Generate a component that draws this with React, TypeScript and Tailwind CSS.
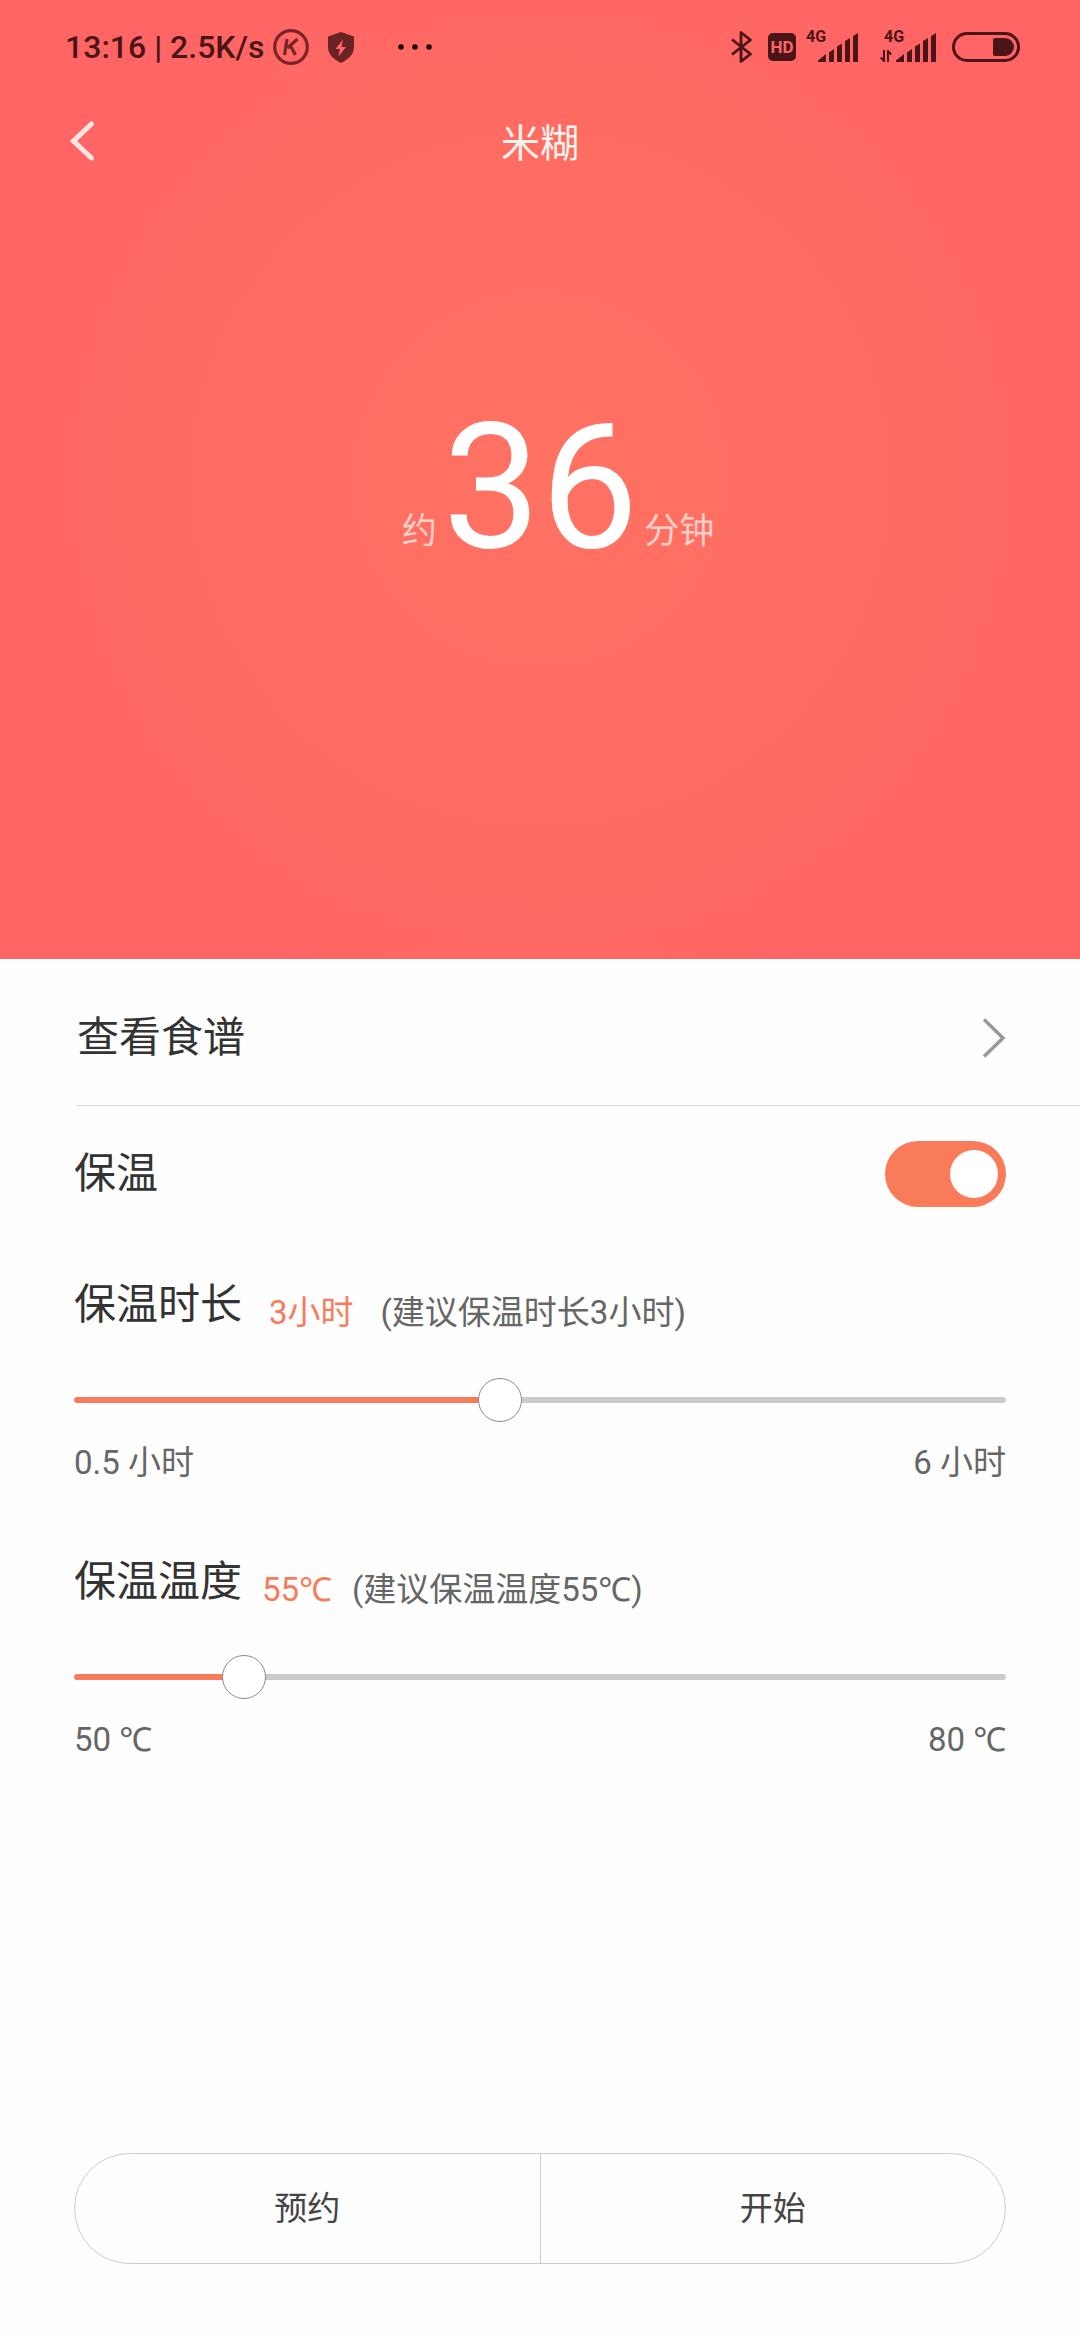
import { useState } from "react";

function SignalBars() {
  return (
    <svg width="40" height="29" viewBox="0 0 40 29" fill="currentColor">
      <path d="M0 27.5 8 21v8H0z" />
      <path d="M11 19.5 16 16v13h-5z" />
      <path d="M19 13.5 24 10.500v18.500h-5z" />
      <path d="M27 8 32 5v24h-5z" />
      <path d="M35 3 40 0v29h-5z" />
    </svg>
  );
}

function Signal({ transfer = false }: { transfer?: boolean }) {
  return (
    <div
      className={
        transfer
          ? "relative flex w-[56px] justify-end"
          : "relative flex w-[52px] justify-end"
      }
    >
      <span
        className={
          transfer
            ? "absolute -top-1 left-1 text-[16px] leading-4 font-bold"
            : "absolute -top-1 left-0 text-[16px] leading-4 font-bold"
        }
      >
        4G
      </span>
      {transfer && (
        <svg
          className="absolute bottom-0 left-0"
          width="12"
          height="12"
          viewBox="0 0 12 12"
          fill="none"
          stroke="currentColor"
          strokeWidth="2"
        >
          <path d="M4 0v11L.7 7.500M8 12V1l3.300 3.500" />
        </svg>
      )}
      <SignalBars />
    </div>
  );
}

function StatusBar() {
  return (
    <div className="flex h-[94px] items-center justify-between pr-[60px] pl-[65px] text-[#4b1417]">
      <div className="flex items-center">
        <span className="text-[32px] leading-10 font-medium whitespace-pre">
          13:16 | 2.5K/s
        </span>
        <svg
          className="ml-[9px] text-[#7a2427]"
          width="36"
          height="36"
          viewBox="0 0 36 36"
          fill="none"
          stroke="currentColor"
        >
          <circle cx="18" cy="18" r="16.300" strokeWidth="3.200" />
          <path
            d="M14 10 11.500 26M24.500 10 14.500 19M17.500 17 22.500 26"
            strokeWidth="3.200"
          />
        </svg>
        <svg
          className="ml-[18px] text-[#6b2225]"
          width="28"
          height="31"
          viewBox="0 0 28 31"
        >
          <path
            d="M14 0 27 4.500V15c0 7-5 12-13 16C6 27 1 22 1 15V4.500z"
            fill="currentColor"
          />
          <path d="M16 7.500 8.500 17h4.500l-1.500 7.500L19 15h-4.500z" fill="#ff6765" />
        </svg>
        <svg
          className="ml-[42px] text-[#1c0507]"
          width="36"
          height="6"
          viewBox="0 0 36 6"
          fill="currentColor"
        >
          <circle cx="4" cy="3" r="2.800" />
          <circle cx="18" cy="3" r="2.800" />
          <circle cx="32" cy="3" r="2.800" />
        </svg>
      </div>

      <div className="flex items-center">
        <svg
          width="22"
          height="34"
          viewBox="0 0 22 34"
          fill="none"
          stroke="currentColor"
          strokeWidth="2.800"
          strokeLinejoin="round"
        >
          <path d="M1 9.500 19.500 24 10 31.500v-29L19.500 10 1 24.500" />
        </svg>
        <span className="ml-[15px] flex h-7 w-7 items-center justify-center rounded-[5px] bg-current">
          <span className="text-[17px] leading-5 font-bold text-[#ff6765]">
            HD
          </span>
        </span>
        <div className="ml-[10px] flex gap-[22px]">
          <Signal />
          <Signal transfer />
        </div>
        <svg
          className="ml-4"
          width="68"
          height="30"
          viewBox="0 0 68 30"
          fill="none"
        >
          <rect
            x="1.500"
            y="1.500"
            width="65"
            height="27"
            rx="13.500"
            stroke="currentColor"
            strokeWidth="3"
          />
          <path
            d="M43 6h10a9 9 0 0 1 0 18H43a2 2 0 0 1-2-2V8a2 2 0 0 1 2-2z"
            fill="currentColor"
          />
        </svg>
      </div>
    </div>
  );
}

function Slider({
  id,
  title,
  unit,
  gap,
  hint,
  min,
  max,
  step,
  value,
  onChange,
}: {
  id: string;
  title: string;
  unit: string;
  gap: string;
  hint: string;
  min: number;
  max: number;
  step: number;
  value: number;
  onChange: (value: number) => void;
}) {
  const ratio = (value - min) / (max - min);
  const fill = `calc(22px + (100% - 44px) * ${ratio})`;

  return (
    <div className="flex h-[277px] flex-col">
      <div className={gap}>
        <label htmlFor={id} className="text-[42px] leading-[60px] text-[#333]">
          {title}
        </label>
        <span className="mt-2 text-[33px] leading-[60px] text-[#fa7b5c]">
          {value}
          {unit}
        </span>
        <span className="mt-2 text-[33px] leading-[60px] text-[#666]">
          {hint}
        </span>
      </div>
      <input
        id={id}
        type="range"
        min={min}
        max={max}
        step={step}
        value={value}
        onChange={(e) => onChange(Number(e.target.value))}
        style={{
          backgroundImage: `linear-gradient(to right, #fa7b5c ${fill}, #cbcbcb ${fill})`,
        }}
        className="mt-[54px] h-[6px] w-full appearance-none rounded-full [&::-webkit-slider-thumb]:h-11 [&::-webkit-slider-thumb]:w-11 [&::-webkit-slider-thumb]:appearance-none [&::-webkit-slider-thumb]:rounded-full [&::-webkit-slider-thumb]:border [&::-webkit-slider-thumb]:border-[#8a8a8a] [&::-webkit-slider-thumb]:bg-white"
      />
      <div className="mt-9 flex justify-between text-[33px] leading-[48px] text-[#666]">
        <span>
          {min} {unit}
        </span>
        <span>
          {max} {unit}
        </span>
      </div>
    </div>
  );
}

export default function App() {
  const [keepWarm, setKeepWarm] = useState(true);
  const [hours, setHours] = useState(3);
  const [degrees, setDegrees] = useState(55);

  return (
    <div className="flex min-h-screen flex-col bg-[#fefefe] font-[Roboto,'Noto_Sans','Noto_Sans_CJK_SC',sans-serif]">
      <header className="bg-[radial-gradient(circle_at_center,#ff7262_0%,#ff6b62_52%,#ff6565_78%)] pb-96">
        <StatusBar />
        <div className="grid h-[94px] grid-cols-3 items-center px-[70px]">
          <button type="button" aria-label="返回" className="w-6 text-[#ffe6e0]">
            <svg
              width="24"
              height="40"
              viewBox="0 0 24 40"
              fill="none"
              stroke="currentColor"
              strokeWidth="5"
              strokeLinecap="round"
            >
              <path d="M21.500 3 3.500 20l18 17" />
            </svg>
          </button>
          <h1 className="pt-[6px] text-center text-[39px] leading-[56px] text-[#fff3ee]">
            米糊
          </h1>
        </div>
        <div className="flex items-end justify-center gap-[6px] pt-[213px] pl-9 text-[35px] leading-none text-[#ffcfc8]">
          <span className="pb-[26px]">约</span>
          <span className="text-[174px] leading-none text-white">36</span>
          <span className="pb-[26px]">分钟</span>
        </div>
      </header>

      <main>
        <a
          href="#recipe"
          className="ml-[77px] flex h-[147px] items-center justify-between border-b border-[#d2d2d2] pt-4 pr-[74px] pb-1"
        >
          <span className="text-[42px] leading-[60px] text-[#333]">
            查看食谱
          </span>
          <svg
            width="24"
            height="40"
            viewBox="0 0 24 40"
            fill="none"
            stroke="#999"
            strokeWidth="3.500"
          >
            <path d="M2 1.500 21 20 2 38.500" />
          </svg>
        </a>

        <div className="px-[74px]">
          <div className="flex h-[136px] items-center justify-between">
            <label
              htmlFor="keep-warm"
              className="text-[42px] leading-[60px] text-[#333]"
            >
              保温
            </label>
            <input
              id="keep-warm"
              type="checkbox"
              role="switch"
              checked={keepWarm}
              onChange={(e) => setKeepWarm(e.target.checked)}
              className="flex h-[66px] w-[121px] appearance-none items-center rounded-full bg-[#cbcbcb] px-2 before:h-12 before:w-12 before:rounded-full before:bg-white checked:justify-end checked:bg-[#fa7b5a]"
            />
          </div>

          <div className="pt-[33px]">
            <Slider
              id="duration"
              title="保温时长"
              unit="小时"
              gap="flex gap-[27px]"
              hint="(建议保温时长3小时)"
              min={0.5}
              max={6}
              step={0.5}
              value={hours}
              onChange={setHours}
            />
            <Slider
              id="temperature"
              title="保温温度"
              unit="℃"
              gap="flex gap-5"
              hint="(建议保温温度55℃)"
              min={50}
              max={80}
              step={1}
              value={degrees}
              onChange={setDegrees}
            />
          </div>
        </div>
      </main>

      <footer className="mt-auto px-[74px] pb-[76px]">
        <div className="flex h-[111px] divide-x divide-[#ccc] rounded-full border border-[#ccc] text-[33px] leading-[48px] text-[#444]">
          <button type="button" className="flex-1">
            预约
          </button>
          <button type="button" className="flex-1">
            开始
          </button>
        </div>
      </footer>
    </div>
  );
}
